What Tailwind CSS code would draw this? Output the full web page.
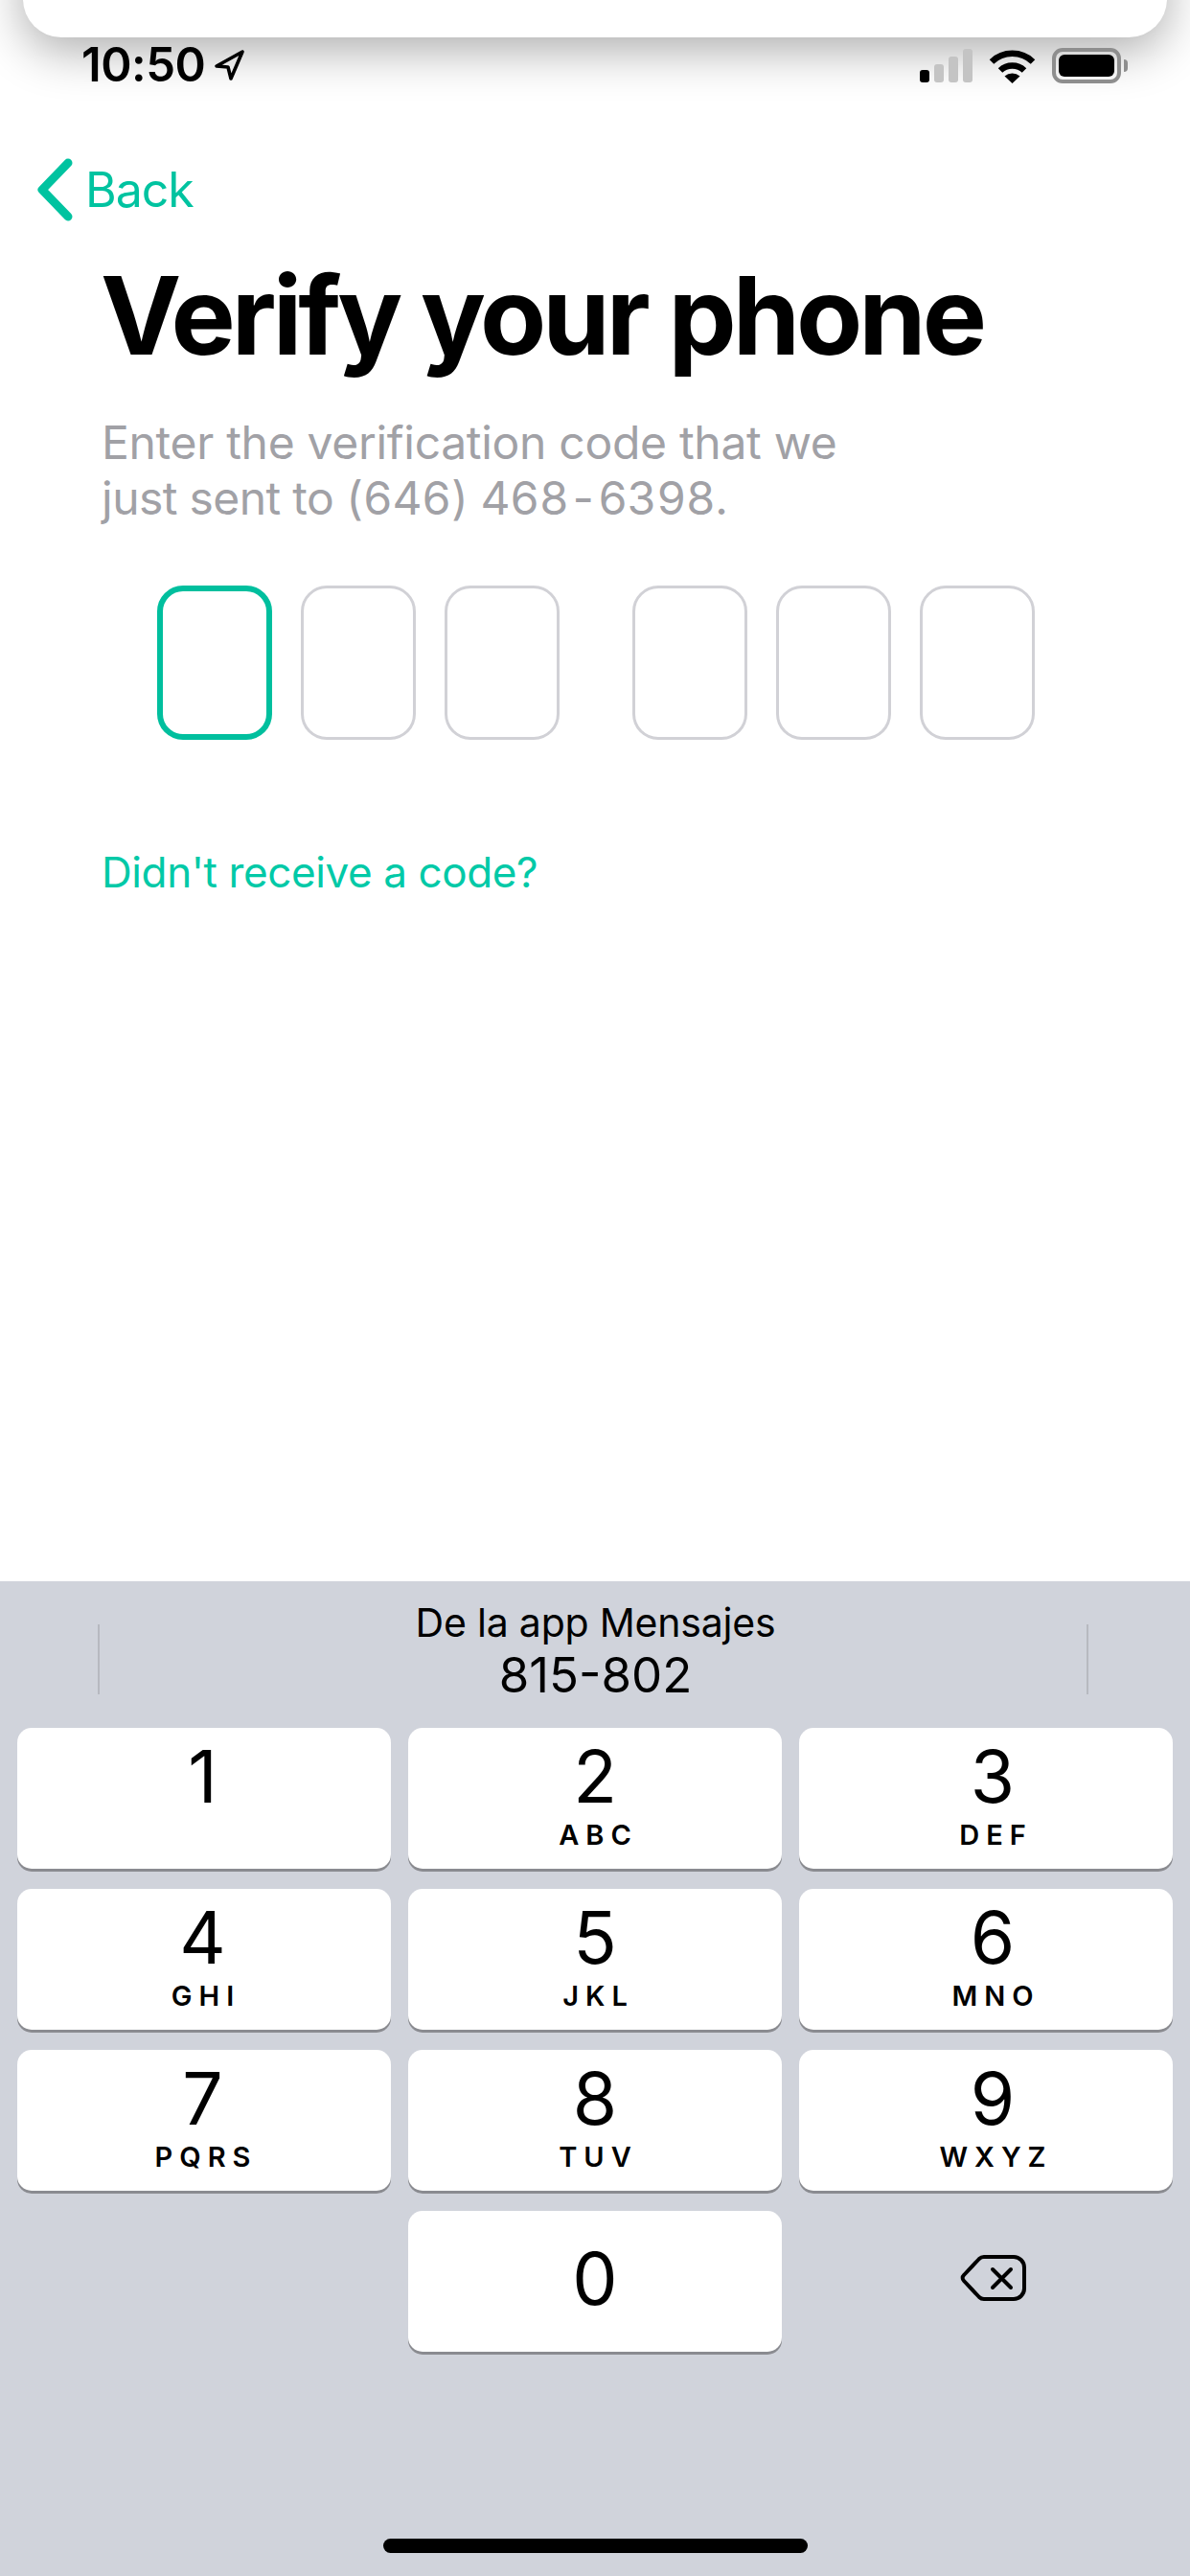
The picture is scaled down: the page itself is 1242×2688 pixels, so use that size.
<!DOCTYPE html>
<html>
  <head>
    <meta charset="UTF-8" />
    <meta name="viewport" content="width=device-width, initial-scale=1.0" />
    <script src="https://cdn.jsdelivr.net/npm/@tailwindcss/browser@4"></script>
  </head>
  <body class="bg-white font-['Inter','Liberation_Sans',sans-serif] text-black">
    <div class="relative w-[1242px] h-[2688px] overflow-hidden flex flex-col bg-white">
      <!-- notification sliding out at the top -->
      <div class="absolute left-[24px] top-[-60px] w-[1194px] h-[99px] bg-white rounded-b-[40px] shadow-[0_14px_50px_rgba(0,0,0,0.32)]"></div>

      <!-- status bar -->
      <div class="relative flex items-center justify-between h-[38px] mt-[49px] pl-[85px] pr-[65px]">
        <div class="flex items-center gap-[9px]">
          <span class="text-[49px] leading-[38px] font-semibold tracking-[-0.5px]">10:50</span>
          <svg width="33" height="34" viewBox="0 0 33 34" fill="none" stroke="#000" stroke-width="3.6" stroke-linejoin="round"><path d="M30 3 L3 18 L15 19 L18 31 Z" /></svg>
        </div>
        <div class="flex items-center">
          <div class="flex items-end gap-[5px] h-[36px]">
            <div class="w-[10px] h-[13px] rounded-[3px] bg-black"></div>
            <div class="w-[10px] h-[19px] rounded-[3px] bg-[#c4c4c4]"></div>
            <div class="w-[10px] h-[27px] rounded-[3px] bg-[#c4c4c4]"></div>
            <div class="w-[10px] h-[35px] rounded-[3px] bg-[#c4c4c4]"></div>
          </div>
          <svg class="ml-[17px]" width="49" height="37" viewBox="0 0 49 37" fill="none" stroke="#000" stroke-width="6.5"><path d="M3 14.5 A 31 31 0 0 1 46 14.5" /><path d="M12 23.5 A 18 18 0 0 1 37 23.5" /><path d="M24.5 37 L16.5 29.5 A 12 12 0 0 1 32.5 29.5 Z" fill="#000" stroke="none" /></svg>
          <div class="ml-[17px] w-[72px] h-[37px] rounded-[11px] border-[4px] border-[#8e8e8e] p-[3px]">
            <div class="w-full h-full rounded-[6px] bg-black"></div>
          </div>
          <div class="ml-[3px] w-[4px] h-[13px] rounded-r-[4px] bg-[#8e8e8e]"></div>
        </div>
      </div>

      <!-- back link -->
      <div class="flex items-center gap-[13px] mt-[78px] ml-[38px] h-[66px]">
        <svg width="38" height="66" viewBox="0 0 38 66" fill="none" stroke="#00c3a0" stroke-width="9" stroke-linecap="round" stroke-linejoin="round"><path d="M33 5 L6 33 L33 61" /></svg>
        <span class="text-[50px] leading-[60px] text-[#00c3a0] tracking-[-1px]">Back</span>
      </div>

      <!-- content -->
      <div class="pl-[105px]">
        <h1 class="mt-[33px] text-[113px] leading-[130px] font-bold tracking-[-4px]">Verify your phone</h1>
        <p class="mt-[39px] ml-[1px] text-[48px] leading-[58px] text-[#a1a1a6] tracking-[-0.3px]">Enter the verification code that we<br /><span class="tabular-nums tracking-[-0.5px]">just sent to (646) 468-6398.</span></p>
      </div>

      <!-- code boxes -->
      <div class="flex mt-[62px] ml-[164px]">
        <div class="flex gap-[30px]">
          <div class="w-[120px] h-[161px] rounded-[27px] border-[6px] border-[#00bf9e]"></div>
          <div class="w-[120px] h-[161px] rounded-[27px] border-[3px] border-[#d1d1d6]"></div>
          <div class="w-[120px] h-[161px] rounded-[27px] border-[3px] border-[#d1d1d6]"></div>
        </div>
        <div class="flex gap-[30px] ml-[76px]">
          <div class="w-[120px] h-[161px] rounded-[27px] border-[3px] border-[#d1d1d6]"></div>
          <div class="w-[120px] h-[161px] rounded-[27px] border-[3px] border-[#d1d1d6]"></div>
          <div class="w-[120px] h-[161px] rounded-[27px] border-[3px] border-[#d1d1d6]"></div>
        </div>
      </div>

      <p class="mt-[110px] ml-[106px] text-[44px] leading-[56px] text-[#00c9a7] tracking-[-0.4px]">Didn't receive a code?</p>

      <!-- keyboard -->
      <div class="mt-auto h-[1038px] bg-[#d0d3db] relative">
        <div class="flex items-center justify-between h-[153px] pl-[102px] pr-[106px]">
          <div class="w-[2px] h-[73px] mt-[10px] bg-[#b7b9c0]"></div>
          <div class="flex flex-col items-center mb-[8px] ml-[5px]">
            <span class="text-[41px] leading-[50px] tracking-[-0.2px]">De la app Mensajes</span>
            <span class="text-[51px] leading-[60px]">815-802</span>
          </div>
          <div class="w-[2px] h-[73px] mt-[10px] bg-[#b7b9c0]"></div>
        </div>
        <div class="grid grid-cols-3 gap-x-[18px] gap-y-[21px] px-[18px]">
          <div class="h-[147px] bg-white rounded-[15px] shadow-[0_3px_0_#8a8b90] flex flex-col items-center pt-[13px] pr-[3px]"><span class="text-[75px] leading-[75px]">1</span></div>
          <div class="h-[147px] bg-white rounded-[15px] shadow-[0_3px_0_#8a8b90] flex flex-col items-center pt-[13px]"><span class="text-[75px] leading-[75px]">2</span><span class="mt-[9px] text-[29px] leading-[30px] font-semibold tracking-[7px] mr-[-7px]">ABC</span></div>
          <div class="h-[147px] bg-white rounded-[15px] shadow-[0_3px_0_#8a8b90] flex flex-col items-center pt-[13px] pl-[14px]"><span class="text-[75px] leading-[75px]">3</span><span class="mt-[9px] text-[29px] leading-[30px] font-semibold tracking-[7px] mr-[-7px]">DEF</span></div>
          <div class="h-[147px] bg-white rounded-[15px] shadow-[0_3px_0_#8a8b90] flex flex-col items-center pt-[13px] pr-[3px]"><span class="text-[75px] leading-[75px]">4</span><span class="mt-[9px] text-[29px] leading-[30px] font-semibold tracking-[7px] mr-[-7px]">GHI</span></div>
          <div class="h-[147px] bg-white rounded-[15px] shadow-[0_3px_0_#8a8b90] flex flex-col items-center pt-[13px]"><span class="text-[75px] leading-[75px]">5</span><span class="mt-[9px] text-[29px] leading-[30px] font-semibold tracking-[7px] mr-[-7px]">JKL</span></div>
          <div class="h-[147px] bg-white rounded-[15px] shadow-[0_3px_0_#8a8b90] flex flex-col items-center pt-[13px] pl-[14px]"><span class="text-[75px] leading-[75px]">6</span><span class="mt-[9px] text-[29px] leading-[30px] font-semibold tracking-[7px] mr-[-7px]">MNO</span></div>
          <div class="h-[147px] bg-white rounded-[15px] shadow-[0_3px_0_#8a8b90] flex flex-col items-center pt-[13px] pr-[3px]"><span class="text-[75px] leading-[75px]">7</span><span class="mt-[9px] text-[29px] leading-[30px] font-semibold tracking-[7px] mr-[-7px]">PQRS</span></div>
          <div class="h-[147px] bg-white rounded-[15px] shadow-[0_3px_0_#8a8b90] flex flex-col items-center pt-[13px]"><span class="text-[75px] leading-[75px]">8</span><span class="mt-[9px] text-[29px] leading-[30px] font-semibold tracking-[7px] mr-[-7px]">TUV</span></div>
          <div class="h-[147px] bg-white rounded-[15px] shadow-[0_3px_0_#8a8b90] flex flex-col items-center pt-[13px] pl-[14px]"><span class="text-[75px] leading-[75px]">9</span><span class="mt-[9px] text-[29px] leading-[30px] font-semibold tracking-[7px] mr-[-7px]">WXYZ</span></div>
          <div class="h-[147px]"></div>
          <div class="h-[147px] bg-white rounded-[15px] shadow-[0_3px_0_#8a8b90] flex flex-col items-center pt-[33px]"><span class="text-[75px] leading-[75px]">0</span></div>
          <div class="h-[147px] flex items-start justify-center pl-[16px] pt-[45px]">
            <svg width="70" height="50" viewBox="0 0 70 50" fill="none" stroke="#000" stroke-width="4" stroke-linecap="round" stroke-linejoin="round"><path d="M25 3 H56 a11 11 0 0 1 11 11 V36 a11 11 0 0 1 -11 11 H25 a7 7 0 0 1 -5 -2 L4 28 a4 4 0 0 1 0 -6 L20 5 a7 7 0 0 1 5 -2 Z" /><path d="M34 16 L53 35 M53 16 L34 35" /></svg>
          </div>
        </div>
        <div class="absolute left-[400px] top-[999px] w-[443px] h-[15px] rounded-full bg-black"></div>
      </div>
    </div>
  </body>
</html>
